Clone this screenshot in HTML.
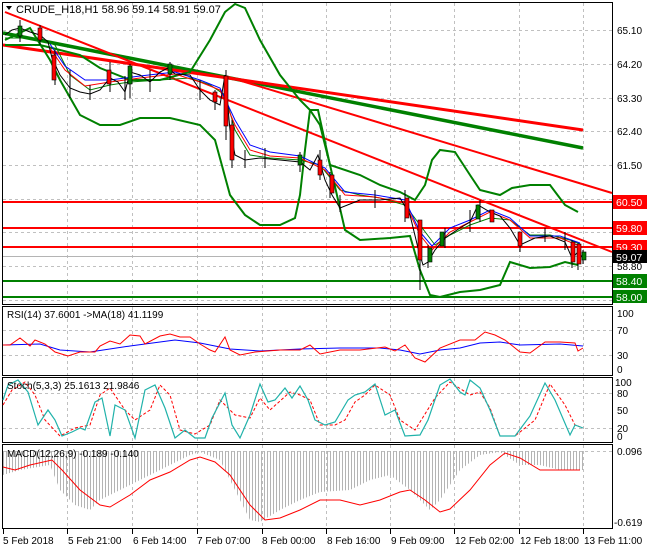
<!DOCTYPE html>
<html><head><meta charset="utf-8"><style>
html,body{margin:0;padding:0;background:#fff;}
svg{display:block;font-family:"Liberation Sans",sans-serif;font-size:10px;}
</style></head><body>
<svg width="650" height="550" viewBox="0 0 650 550" xmlns="http://www.w3.org/2000/svg">
<defs>
<pattern id="hist" width="3" height="10" patternUnits="userSpaceOnUse"><rect x="0" y="0" width="1" height="10" fill="#b4b4b4"/></pattern>
</defs>
<rect width="650" height="550" fill="#fff"/>
<g fill="none" stroke="#000" stroke-width="1">
<rect x="2.5" y="2.5" width="610" height="302"/>
<rect x="2.5" y="306.5" width="610" height="69"/>
<rect x="2.5" y="377.5" width="610" height="65"/>
<rect x="2.5" y="444.5" width="610" height="84"/>
</g>
<g stroke="#c0c0c0" stroke-dasharray="3,3" stroke-width="1">
<path d="M67.5 3V304M132.5 3V304M197.5 3V304M262.5 3V304M326.5 3V304M390.5 3V304M454.5 3V304M519.5 3V304M583.5 3V304"/>
<path d="M67.5 307V375M132.5 307V375M197.5 307V375M262.5 307V375M326.5 307V375M390.5 307V375M454.5 307V375M519.5 307V375M583.5 307V375"/>
<path d="M67.5 378V442M132.5 378V442M197.5 378V442M262.5 378V442M326.5 378V442M390.5 378V442M454.5 378V442M519.5 378V442M583.5 378V442"/>
<path d="M67.5 445V528M132.5 445V528M197.5 445V528M262.5 445V528M326.5 445V528M390.5 445V528M454.5 445V528M519.5 445V528M583.5 445V528"/>
<path d="M3 30.5H612M3 64.5H612M3 98.5H612M3 131.5H612M3 165.5H612M3 199.5H612M3 232.5H612M3 266.5H612M3 300.5H612"/>
<path d="M3 330.5H612M3 355.5H612M3 393.5H612M3 428.5H612M3 451.5H612"/>
</g>
<path d="M3 256.5H612" stroke="#b4b4b4"/>
<g stroke="#f00" stroke-width="2"><path d="M3 202H612M3 228H612M3 247H612"/></g>
<g stroke="#008000" stroke-width="2"><path d="M3 281H612M3 297H612"/></g>
<!-- trendlines -->
<path d="M3 33L583 148" stroke="#008000" stroke-width="3.5" fill="none"/>
<path d="M3 45L583 130" stroke="#f00" stroke-width="3" fill="none"/>
<path d="M5 12L612 252" stroke="#f00" stroke-width="2" fill="none"/>
<path d="M225 76L612 193" stroke="#f00" stroke-width="2" fill="none"/>
<!-- bollinger -->
<g fill="none" stroke="#008000" stroke-width="2">
<polyline points="5,45 40,45 60,50 80,55 100,68 130,80 160,80 190,72 210,40 225,12 235,4 245,8 260,40 280,75 300,100 310,110 320,125 330,165 360,175 380,185 400,192 415,200 425,185 432,160 440,150 455,152 470,175 480,190 500,195 512,188 530,185 550,185 565,205 578,212"/>
<polyline points="5,40 30,28 50,60 60,80 80,115 100,125 120,125 140,118 170,118 200,125 215,140 230,195 245,215 260,225 280,225 295,218 300,195 305,150 310,110 318,110 330,165 345,230 360,240 390,238 410,236 420,270 430,295 440,297 460,292 480,290 500,285 510,262 530,268 550,267 565,262 578,265"/>
</g>
<g fill="none" stroke-width="1">
<polyline stroke="#008000" points="5,38 40,38 55,45 70,75 90,90 110,85 130,82 160,80 190,78 210,85 225,95 235,130 250,155 270,158 300,160 320,165 340,190 360,195 380,198 405,205 420,225 435,245 450,235 470,225 490,218 510,220 530,235 550,235 570,240 580,244"/>
<polyline stroke="#f00" points="50,48 65,70 85,86 110,82 140,78 175,74 200,82 220,90 235,125 250,150 270,156 300,158 325,170 345,195 375,197 405,203 420,235 432,250 450,232 470,222 490,212 510,220 530,238 560,238 580,246"/>
<polyline stroke="#00f" points="50,44 65,66 85,80 110,80 140,76 175,72 200,80 220,88 235,120 250,145 270,152 300,156 325,168 345,192 375,195 405,200 420,232 432,246 450,228 470,220 490,210 510,218 530,236 560,236 580,243"/>
</g>
<polyline fill="none" stroke="#000" stroke-width="1" points="5,35 12,30 20,28 30,32 40,35 48,42 52,58 60,75 70,88 80,92 90,94 100,90 110,78 118,82 125,92 130,72 140,75 150,82 160,72 168,68 175,74 190,75 200,90 210,100 220,105 225,75 230,130 235,155 245,160 260,158 280,160 300,162 310,170 318,155 325,180 332,195 340,208 360,200 380,200 400,198 410,215 418,248 423,265 428,262 435,250 445,238 460,228 470,222 478,205 490,212 500,216 510,228 520,245 535,238 550,236 565,242 572,258 578,252 583,258"/>
<g stroke="#000" stroke-width="1">
<path d="M20 20V42M40 25V45M55 50V85M70 70V98M90 85V100M110 62V92M125 76V100M130 64V98M150 70V92M170 62V80M200 80V100M215 90V110M226 70V140M232 120V168M245 150V168M265 148V168M300 152V172M320 150V180M330 172V198M340 195V212M375 190V208M405 190V222M420 235V290M428 245V268M445 228V248M470 210V232M480 200V222M520 232V252M545 228V242M565 232V250M572 240V268M578 244V270M583 250V264"/>
</g>
<g fill="#f00" stroke="#000" stroke-width="0.6">
<rect x="38" y="28" width="4" height="12"/><rect x="52" y="55" width="4" height="25"/><rect x="107" y="70" width="4" height="14"/><rect x="213" y="92" width="4" height="10"/><rect x="224" y="76" width="4" height="50"/><rect x="230" y="125" width="4" height="35"/><rect x="318" y="160" width="4" height="15"/><rect x="330" y="175" width="4" height="18"/><rect x="405" y="198" width="4" height="20"/><rect x="418" y="220" width="4" height="40"/><rect x="490" y="210" width="4" height="12"/><rect x="518" y="232" width="4" height="14"/><rect x="571" y="242" width="4" height="20"/><rect x="577" y="244" width="4" height="20"/>
</g>
<g fill="#008000" stroke="#000" stroke-width="0.6">
<rect x="18" y="26" width="4" height="10"/><rect x="128" y="66" width="4" height="18"/><rect x="168" y="64" width="4" height="10"/><rect x="298" y="155" width="4" height="10"/><rect x="428" y="248" width="4" height="14"/><rect x="440" y="232" width="4" height="14"/><rect x="476" y="205" width="4" height="14"/><rect x="582" y="252" width="4" height="8"/>
</g>
<text x="16" y="13" fill="#000" font-size="11">CRUDE_H18,H1  58.96 59.14 58.91 59.07</text>
<path d="M6 6L12 6L9 10Z" fill="#000"/>
<g fill="#000" font-size="10">
<text x="617" y="34">65.10</text><text x="617" y="68">64.20</text><text x="617" y="102">63.30</text><text x="617" y="135">62.40</text><text x="617" y="169">61.50</text><text x="617" y="270">58.80</text>
</g>
<g font-size="10.5">
<rect x="613" y="195" width="34" height="14" fill="#f00"/><text x="616" y="206" fill="#fff">60.50</text>
<rect x="613" y="221" width="34" height="14" fill="#f00"/><text x="616" y="232" fill="#fff">59.80</text>
<rect x="613" y="240" width="34" height="13" fill="#f00"/><text x="616" y="251" fill="#fff">59.30</text>
<rect x="613" y="250" width="34" height="13" fill="#000"/><text x="616" y="261" fill="#fff">59.07</text>
<rect x="613" y="274" width="34" height="14" fill="#008000"/><text x="616" y="285" fill="#fff">58.40</text>
<rect x="613" y="290" width="34" height="13" fill="#008000"/><text x="616" y="301" fill="#fff">58.00</text>
</g>
<polyline fill="none" stroke="#00f" stroke-width="1" points="3,345 40,344 60,350 90,352 130,346 175,340 200,343 230,349 260,351 300,349 340,348 380,348 400,350 420,354 440,350 460,348 480,343 500,342 520,345 560,344 583,346"/>
<polyline fill="none" stroke="#f00" stroke-width="1" points="3,345 10,345 20,338 30,346 35,340 45,344 55,352 68,356 80,352 95,352 100,346 110,341 120,344 130,335 140,336 145,344 160,336 170,334 180,337 190,337 200,344 210,350 215,352 225,337 230,350 240,355 255,352 280,350 300,350 310,345 320,354 340,350 360,350 385,347 395,351 405,345 415,358 425,362 440,348 460,340 475,340 485,332 495,335 505,340 520,352 530,353 545,342 560,342 575,343 578,351 583,348"/>
<text x="7" y="318" font-size="10">RSI(14) 37.6001  -&gt;MA(18) 41.1199</text>
<g font-size="10"><text x="617" y="317">100</text><text x="617" y="334">70</text><text x="617" y="359">30</text><text x="617" y="373">0</text></g>
<polyline fill="none" stroke="#f00" stroke-width="1" stroke-dasharray="3,2" points="3,405 12,390 25,382 35,395 45,420 60,436 75,428 90,425 100,395 110,388 125,410 135,420 150,410 160,385 170,395 180,430 195,434 210,425 220,400 235,415 250,418 260,398 270,410 290,392 300,395 310,400 320,425 335,425 345,420 355,402 365,395 375,385 390,395 400,420 415,430 435,398 450,382 470,395 480,392 490,408 500,436 515,436 535,420 550,384 565,405 575,425 583,428"/>
<polyline fill="none" stroke="#20b2aa" stroke-width="1.2" points="3,400 8,385 18,380 28,392 38,425 48,410 55,420 62,436 72,432 80,428 85,430 95,402 102,398 110,436 115,405 125,410 135,438 145,390 155,385 165,408 175,438 185,430 195,438 205,438 212,418 225,393 232,425 240,438 250,415 260,384 268,402 275,400 285,388 292,398 300,386 308,400 315,420 325,425 335,422 348,400 355,395 365,392 375,384 385,415 395,410 405,436 420,435 428,420 440,385 450,379 460,392 465,395 470,380 480,388 490,410 500,436 515,436 530,416 545,383 555,400 570,435 575,425 583,428"/>
<text x="7" y="389" font-size="10">Stoch(5,3,3) 25.1613 21.9846</text>
<g font-size="10"><text x="615" y="386">100</text><text x="617" y="397">80</text><text x="617" y="414">50</text><text x="617" y="432">20</text><text x="617" y="440">0</text></g>
<polygon fill="url(#hist)" points="3,451 583,451 583,470 560,470 540,465 520,465 500,452 480,455 460,470 440,500 430,510 410,490 390,475 370,480 350,490 320,492 300,500 280,510 260,522 250,520 235,490 220,460 200,452 190,455 160,470 130,485 100,500 90,510 75,505 60,490 50,465 20,470 3,475"/>
<polyline fill="none" stroke="#f00" stroke-width="1" points="3,467 15,470 30,465 52,460 62,470 80,490 100,505 110,507 130,495 150,480 170,472 190,460 200,457 215,462 230,475 250,505 265,520 280,518 300,510 320,500 340,500 360,505 380,500 400,492 410,490 425,500 440,512 450,509 470,490 490,465 505,453 520,458 540,470 555,470 580,470"/>
<text x="7" y="457" font-size="10">MACD(12,26,9) -0.189 -0.140</text>
<g font-size="10"><text x="617" y="455">0.096</text><text x="614" y="526">-0.619</text></g>
<g stroke="#000"><path d="M3.5 529V534M67.5 529V534M132.5 529V534M197.5 529V534M262.5 529V534M326.5 529V534M390.5 529V534M454.5 529V534M519.5 529V534M583.5 529V534"/></g>
<g font-size="10"><text x="3" y="544">5 Feb 2018</text><text x="68" y="544">5 Feb 21:00</text><text x="133" y="544">6 Feb 14:00</text><text x="197" y="544">7 Feb 07:00</text><text x="262" y="544">8 Feb 00:00</text><text x="327" y="544">8 Feb 16:00</text><text x="391" y="544">9 Feb 09:00</text><text x="455" y="544">12 Feb 02:00</text><text x="520" y="544">12 Feb 18:00</text><text x="584" y="544">13 Feb 11:00</text></g>
</svg>
</body></html>
